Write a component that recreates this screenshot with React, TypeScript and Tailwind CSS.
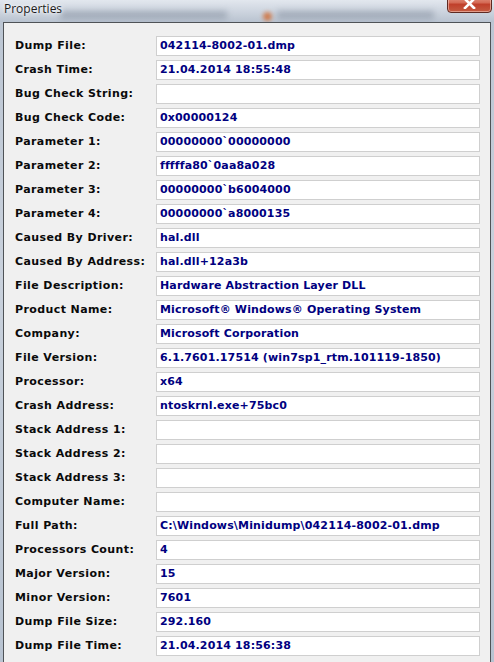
import React from "react";

const rows: [string, string][] = [
  ["Dump File:", "042114-8002-01.dmp"],
  ["Crash Time:", "21.04.2014 18:55:48"],
  ["Bug Check String:", ""],
  ["Bug Check Code:", "0x00000124"],
  ["Parameter 1:", "00000000`00000000"],
  ["Parameter 2:", "fffffa80`0aa8a028"],
  ["Parameter 3:", "00000000`b6004000"],
  ["Parameter 4:", "00000000`a8000135"],
  ["Caused By Driver:", "hal.dll"],
  ["Caused By Address:", "hal.dll+12a3b"],
  ["File Description:", "Hardware Abstraction Layer DLL"],
  ["Product Name:", "Microsoft® Windows® Operating System"],
  ["Company:", "Microsoft Corporation"],
  ["File Version:", "6.1.7601.17514 (win7sp1_rtm.101119-1850)"],
  ["Processor:", "x64"],
  ["Crash Address:", "ntoskrnl.exe+75bc0"],
  ["Stack Address 1:", ""],
  ["Stack Address 2:", ""],
  ["Stack Address 3:", ""],
  ["Computer Name:", ""],
  ["Full Path:", "C:\\Windows\\Minidump\\042114-8002-01.dmp"],
  ["Processors Count:", "4"],
  ["Major Version:", "15"],
  ["Minor Version:", "7601"],
  ["Dump File Size:", "292.160"],
  ["Dump File Time:", "21.04.2014 18:56:38"],
];

function CloseButton() {
  return (
    <div className="-mt-[6px] mr-[2px] flex h-[19px] w-[45px] items-end justify-center rounded-b-[4px] border border-[#5e2a22] bg-[linear-gradient(to_bottom,#e9a593_0%,#d46a55_45%,#c0402b_55%,#c55c42_100%)] pb-[3px] shadow-[inset_0_0_0_1px_rgba(255,220,210,0.5)]">
      <svg width="13" height="11" viewBox="0 0 13 11">
        <path d="M2 1 L11 10 M11 1 L2 10" stroke="#ffffff" strokeWidth="2.6" strokeLinecap="square" />
      </svg>
    </div>
  );
}

function TitleBar() {
  return (
    <div className="relative flex h-[22px] items-start overflow-hidden bg-[linear-gradient(to_bottom,#e2e7ee_0%,#d0d7e1_45%,#b9c3d0_100%)]">
      {/* blurred window content seen through the glass frame */}
      <div className="pointer-events-none absolute inset-x-[60px] top-[11px] flex h-[8px] gap-[50px] opacity-50 blur-[3px]">
        <div className="w-[170px] bg-[#7d8898]" />
        <div className="w-[160px] bg-[#7d8898]" />
      </div>
      <div className="pointer-events-none absolute left-[263px] top-[12px] h-[9px] w-[9px] rounded-full bg-[#d2692e] opacity-80 blur-[2px]" />
      <span className="relative pl-[4px] pt-[1px] text-[12px] leading-[16px] text-[#1b1b1b] [font-family:'Open_Sans','Noto_Sans',sans-serif] [text-shadow:0_0_6px_#ffffff,0_0_3px_#ffffff]">
        Properties
      </span>
      <div className="flex-1" />
      <CloseButton />
    </div>
  );
}

const frameSide =
  "w-[3px] bg-[linear-gradient(to_bottom,#bcc6d3,#c9d1dc_40%,#b8c3d1)]";

export default function App() {
  return (
    <div className="flex h-[662px] w-[494px] flex-col overflow-hidden bg-[#c6cfdb]">
      <TitleBar />
      <div className="flex flex-1">
        <div className={frameSide} />
        <div className="flex-1 border-l border-r border-t border-[#4f5357] bg-[#f0f0f0] pl-[11px] pr-[10px] pt-[13px]">
          <div className="grid grid-cols-[141px_1fr] gap-y-[4px] text-[11px] font-bold [font-family:'DejaVu_Sans',sans-serif]">
            {rows.map(([label, value]) => (
              <React.Fragment key={label}>
                <div className="flex h-[20px] items-center tracking-[0.4px] text-[#0a0a0a]">
                  {label}
                </div>
                <div className="flex h-[20px] items-center whitespace-pre border border-[#cfcfcf] bg-white pl-[3px] tracking-[0.15px] text-[#000080]">
                  {value}
                </div>
              </React.Fragment>
            ))}
          </div>
        </div>
        <div className={frameSide} />
      </div>
    </div>
  );
}
